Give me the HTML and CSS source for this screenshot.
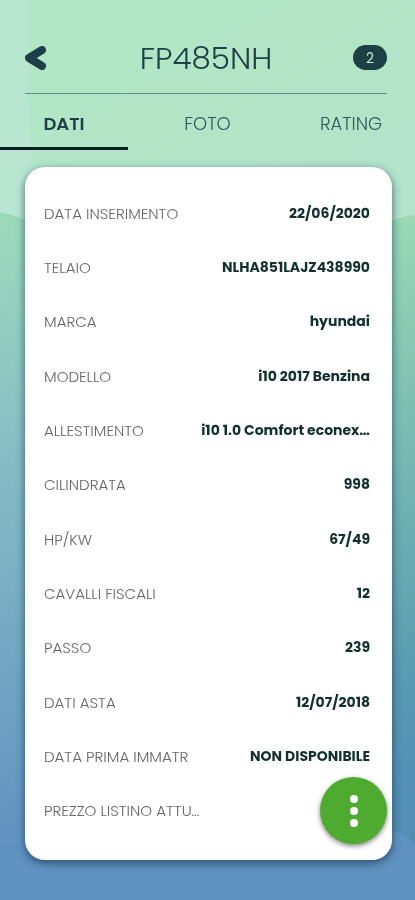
FILE: index.html
```html
<!DOCTYPE html>
<html lang="it">
  <head>
    <meta charset="utf-8">
    <meta name="viewport" content="width=device-width, initial-scale=1">
    <title>FP485NH</title>
    <link rel="stylesheet" href="styles.css">
  </head>
  <body>
    <svg class="backdrop" viewBox="0 0 415 900" preserveAspectRatio="none" aria-hidden="true">
      <defs>
        <linearGradient id="left" x1="0" y1="0" x2="0" y2="1">
          <stop offset="0.22" stop-color="#9edcb9" />
          <stop offset="0.32" stop-color="#97d2bf" />
          <stop offset="0.5" stop-color="#88bdc5" />
          <stop offset="0.75" stop-color="#71a5c3" />
          <stop offset="0.92" stop-color="#6394c1" />
          <stop offset="1" stop-color="#5e90c1" />
        </linearGradient>
        <linearGradient id="right" x1="0" y1="0" x2="0" y2="1">
          <stop offset="0.24" stop-color="#9bdbb3" />
          <stop offset="0.4" stop-color="#88c8b3" />
          <stop offset="0.6" stop-color="#70b1b2" />
          <stop offset="0.8" stop-color="#599bb2" />
          <stop offset="0.93" stop-color="#528eb5" />
        </linearGradient>
        <linearGradient id="top" x1="0" y1="0" x2="1" y2="1">
          <stop offset="0.1" stop-color="#b1e7c4" />
          <stop offset="1" stop-color="#b4e3cb" />
        </linearGradient>
      </defs>
      <rect width="415" height="900" fill="url(#left)" />
      <rect x="208" width="207" height="845" fill="url(#right)" />
      <path d="M0 0H415V215Q404 216 390 221Q200 250 28 222Q14 214 0 212Z" fill="url(#top)" />
      <path d="M0 0H28V90Q30 150 40 222H28Q14 214 0 212Z" fill="#b9e6d0" />
      <path d="M0 900V845H360Q386 829 400 833Q410 837 415 846V900Z" fill="#6092c1" />
    </svg>

    <div class="page">
      <header class="header">
        <button class="back" type="button" aria-label="Indietro">
          <svg width="22" height="24" viewBox="0 0 22 24" aria-hidden="true">
            <path d="M17 4L4 12L17 20" />
          </svg>
        </button>
        <h1 class="plate">FP485NH</h1>
        <span class="count">2</span>
      </header>

      <nav class="tabs">
        <a class="tab active" href="#dati">DATI</a>
        <a class="tab" href="#foto">FOTO</a>
        <a class="tab" href="#rating">RATING</a>
      </nav>

      <main class="card" id="dati">
        <table class="details">
          <tr><th scope="row">DATA INSERIMENTO</th><td>22/06/2020</td></tr>
          <tr><th scope="row">TELAIO</th><td>NLHA851LAJZ438990</td></tr>
          <tr><th scope="row">MARCA</th><td>hyundai</td></tr>
          <tr><th scope="row">MODELLO</th><td>i10 2017 Benzina</td></tr>
          <tr><th scope="row">ALLESTIMENTO</th><td>i10 1.0 Comfort econex…</td></tr>
          <tr><th scope="row">CILINDRATA</th><td>998</td></tr>
          <tr><th scope="row">HP/KW</th><td>67/49</td></tr>
          <tr><th scope="row">CAVALLI FISCALI</th><td>12</td></tr>
          <tr><th scope="row">PASSO</th><td>239</td></tr>
          <tr><th scope="row">DATI ASTA</th><td>12/07/2018</td></tr>
          <tr><th scope="row">DATA PRIMA IMMATR</th><td>NON DISPONIBILE</td></tr>
          <tr><th scope="row">PREZZO LISTINO ATTU…</th><td></td></tr>
        </table>
      </main>
    </div>

    <button class="fab" type="button" aria-label="Altre azioni">
      <svg width="10" height="34" viewBox="0 0 10 34" aria-hidden="true">
        <circle cx="5" cy="5" r="4" />
        <circle cx="5" cy="17" r="4" />
        <circle cx="5" cy="29" r="4" />
      </svg>
    </button>
  </body>
</html>
```
FILE: styles.css
```css
* {
  box-sizing: border-box;
}

body {
  margin: 0;
  color: #1c4045;
  font-family: Poppins, Inter, sans-serif;
  font-size: 14px;
}

button {
  padding: 0;
  border: none;
  cursor: pointer;
}

.backdrop {
  position: fixed;
  inset: 0;
  z-index: -1;
  width: 100%;
  height: 100%;
}

.page {
  display: flex;
  flex-direction: column;
  min-height: 100vh;
  padding-bottom: 40px;
}

.header {
  display: grid;
  grid-template-columns: 34px 1fr 34px;
  align-items: center;
  margin: 22px 28px 0 25px;
  height: 72px;
  border-bottom: 1px solid #5f8f86;
}

.back {
  display: flex;
  background: none;
}

.back path {
  fill: none;
  stroke: #1c4045;
  stroke-width: 8;
  stroke-linecap: round;
  stroke-linejoin: round;
}

.plate {
  margin: 0;
  font-size: 31px;
  font-weight: 300;
  line-height: 36px;
  text-align: center;
}

.count {
  height: 25px;
  border-radius: 13px;
  background: #1c4045;
  color: #c5e8d4;
  line-height: 26px;
  text-align: center;
}

.tabs {
  display: flex;
  justify-content: space-between;
  height: 56px;
}

.tab {
  width: 128px;
  border-bottom: 3px solid transparent;
  color: #2f5a58;
  font-size: 18px;
  font-weight: 300;
  line-height: 60px;
  text-align: center;
  text-decoration: none;
}

.tab.active {
  border-color: #0c1f22;
  color: #1c4045;
  font-weight: 600;
}

.card {
  display: flex;
  flex: 1;
  flex-direction: column;
  margin: 17px 23px 0 25px;
  padding: 19px 22px 22px 19px;
  border-radius: 20px;
  background: #fff;
  box-shadow: 0 3px 9px rgba(20, 50, 80, 0.7);
}

.details {
  flex: 1;
  width: 100%;
  border-collapse: collapse;
}

.details th,
.details td {
  height: 54px;
  padding: 0;
  white-space: nowrap;
}

.details th {
  color: #666;
  font-size: 15px;
  font-weight: 300;
  text-align: left;
}

.details td {
  color: #12302f;
  font-weight: 700;
  text-align: right;
}

.fab {
  position: fixed;
  right: 28px;
  bottom: 56px;
  display: flex;
  align-items: center;
  justify-content: center;
  width: 67px;
  height: 67px;
  border-radius: 50%;
  background: #4eab30;
  box-shadow: 0 2px 5px rgba(0, 0, 0, 0.5);
}

.fab circle {
  fill: #fff;
}
```
